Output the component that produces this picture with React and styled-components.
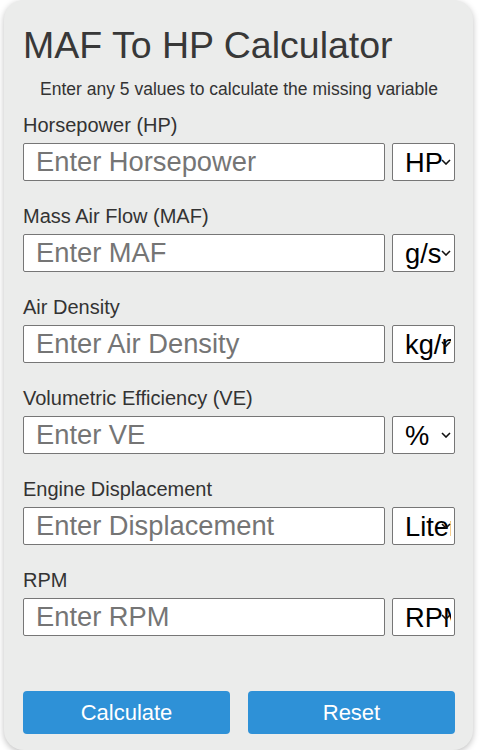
import React from "react";
import styled, { createGlobalStyle } from "styled-components";

const GlobalStyle = createGlobalStyle`
  body {
    margin: 0;
    background: #ffffff;
    font-family: "Liberation Sans", Arial, sans-serif;
  }
`;

const Card = styled.div`
  box-sizing: border-box;
  width: 469px;
  margin-left: 4px;
  padding: 25px 18px 16px 19px;
  background: #ebeceb;
  border-radius: 20px;
  box-shadow: 0 2px 6px rgba(0, 0, 0, 0.25);
  display: flex;
  flex-direction: column;
`;

const Title = styled.h1`
  margin: 0;
  font-size: 37.5px;
  line-height: 41px;
  font-weight: normal;
  color: #383838;
`;

const Subtitle = styled.p`
  margin: 12.5px 0 15.5px;
  font-size: 17.5px;
  line-height: 20px;
  text-align: center;
  color: #333333;
`;

const Field = styled.div`
  display: flex;
  flex-direction: column;
  gap: 6px;
  margin-bottom: 24px;
`;

const Label = styled.label`
  font-size: 20px;
  line-height: 23px;
  color: #333333;
`;

const Row = styled.div`
  display: flex;
  gap: 7px;
`;

const Input = styled.input`
  box-sizing: border-box;
  width: 362px;
  height: 38px;
  padding: 0 12px;
  border: 1px solid #767676;
  border-radius: 2px;
  background: #ffffff;
  font-family: inherit;
  font-size: 27.3px;
  color: #222;
  outline: none;

  &::placeholder {
    color: #757575;
  }
`;

const UnitWrap = styled.div`
  position: relative;
  width: 63px;
  height: 38px;
`;

const Unit = styled.select`
  appearance: none;
  -webkit-appearance: none;
  box-sizing: border-box;
  width: 100%;
  height: 100%;
  padding: 0 3px 0 12px;
  border: 1px solid #767676;
  border-radius: 2px;
  background: #ffffff;
  font-family: inherit;
  font-size: 27.3px;
  color: #000;
  outline: none;
`;

const Chevron = styled.svg`
  position: absolute;
  right: 4px;
  top: 16px;
  width: 10px;
  height: 6px;
  pointer-events: none;
`;

const Buttons = styled.div`
  display: flex;
  gap: 18px;
  margin-top: 31px;
`;

const Button = styled.button`
  flex: 1;
  height: 43px;
  border: none;
  border-radius: 4px;
  background: #2e91d7;
  color: #ffffff;
  font-family: inherit;
  font-size: 22px;
  cursor: pointer;
`;

const fields = [
  { label: "Horsepower (HP)", placeholder: "Enter Horsepower", units: ["HP", "kW"] },
  { label: "Mass Air Flow (MAF)", placeholder: "Enter MAF", units: ["g/s", "lb/min"] },
  { label: "Air Density", placeholder: "Enter Air Density", units: ["kg/m³", "lb/ft³"] },
  { label: "Volumetric Efficiency (VE)", placeholder: "Enter VE", units: ["%"] },
  { label: "Engine Displacement", placeholder: "Enter Displacement", units: ["Liters", "cc"] },
  { label: "RPM", placeholder: "Enter RPM", units: ["RPM"] },
];

export default function App() {
  return (
    <>
      <GlobalStyle />
      <Card>
        <Title>MAF To HP Calculator</Title>
        <Subtitle>Enter any 5 values to calculate the missing variable</Subtitle>
        {fields.map((f) => (
          <Field key={f.label}>
            <Label>{f.label}</Label>
            <Row>
              <Input type="number" placeholder={f.placeholder} />
              <UnitWrap>
                <Unit defaultValue={f.units[0]}>
                  {f.units.map((u) => (
                    <option key={u} value={u}>
                      {u}
                    </option>
                  ))}
                </Unit>
                <Chevron viewBox="0 0 10 6">
                  <path d="M1 1l4 4 4-4" fill="none" stroke="#111" strokeWidth="1.6" />
                </Chevron>
              </UnitWrap>
            </Row>
          </Field>
        ))}
        <Buttons>
          <Button>Calculate</Button>
          <Button>Reset</Button>
        </Buttons>
      </Card>
    </>
  );
}
